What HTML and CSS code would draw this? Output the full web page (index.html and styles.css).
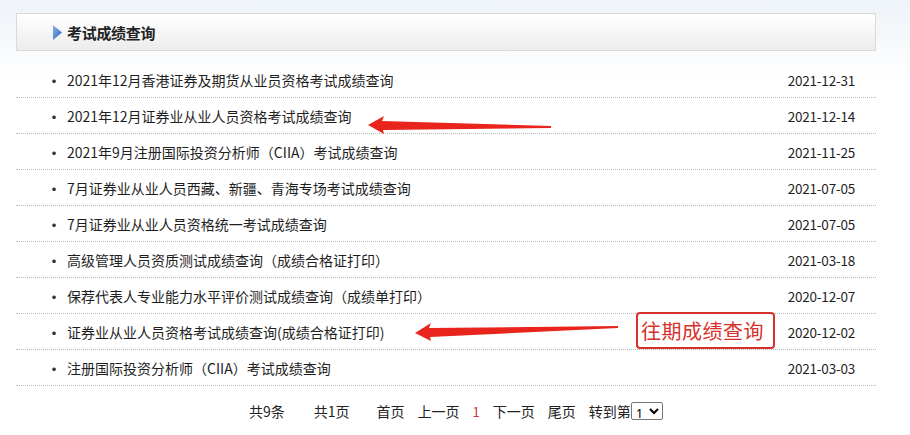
FILE: index.html
```html
<!DOCTYPE html>
<html lang="zh-CN">
<head>
<meta charset="utf-8">
<title>考试成绩查询</title>
<link rel="stylesheet" href="styles.css">
</head>
<body>
<div class="page">
  <div class="panel">
    <div class="panel-head">
      <svg class="tri" width="9" height="15" viewBox="0 0 9 15">
        <defs>
          <linearGradient id="tg" x1="0" y1="0" x2="1" y2="1">
            <stop offset="0" stop-color="#8db6ec"/>
            <stop offset="1" stop-color="#2a5fb8"/>
          </linearGradient>
        </defs>
        <polygon points="0,0 9,7.5 0,15" fill="url(#tg)"/>
      </svg>
      <span class="title">考试成绩查询</span>
    </div>
    <ul class="list">
      <li class="row"><span class="dot">·</span><span class="name">2021年12月香港证券及期货从业员资格考试成绩查询</span><span class="date">2021-12-31</span></li>
      <li class="row"><span class="dot">·</span><span class="name">2021年12月证券业从业人员资格考试成绩查询</span><span class="date">2021-12-14</span></li>
      <li class="row"><span class="dot">·</span><span class="name">2021年9月注册国际投资分析师（CIIA）考试成绩查询</span><span class="date">2021-11-25</span></li>
      <li class="row"><span class="dot">·</span><span class="name">7月证券业从业人员西藏、新疆、青海专场考试成绩查询</span><span class="date">2021-07-05</span></li>
      <li class="row"><span class="dot">·</span><span class="name">7月证券业从业人员资格统一考试成绩查询</span><span class="date">2021-07-05</span></li>
      <li class="row"><span class="dot">·</span><span class="name">高级管理人员资质测试成绩查询（成绩合格证打印）</span><span class="date">2021-03-18</span></li>
      <li class="row"><span class="dot">·</span><span class="name">保荐代表人专业能力水平评价测试成绩查询（成绩单打印）</span><span class="date">2020-12-07</span></li>
      <li class="row"><span class="dot">·</span><span class="name">证券业从业人员资格考试成绩查询(成绩合格证打印)</span><span class="tag">往期成绩查询</span><span class="date">2020-12-02</span></li>
      <li class="row"><span class="dot">·</span><span class="name">注册国际投资分析师（CIIA）考试成绩查询</span><span class="date">2021-03-03</span></li>
    </ul>
    <div class="pager">
      <span class="pg pg-wide">共9条</span>
      <span class="pg pg-wide2">共1页</span>
      <span class="pg">首页</span>
      <span class="pg">上一页</span>
      <span class="pg cur">1</span>
      <span class="pg">下一页</span>
      <span class="pg">尾页</span>
      <span class="goto">转到第</span><select class="sel"><option>1</option></select>
    </div>
  </div>
</div>
<svg class="arrows" width="910" height="435" viewBox="0 0 910 435">
  <polygon points="368,125 384,116 382,121 551,126 551,128 383,130 384,134" fill="#e8241c"/>
  <polygon points="415,333 431,323 429,328 618,326 618,328 430,337 431,341" fill="#e8241c"/>
</svg>
</body>
</html>
```

FILE: styles.css
```css
html, body {
  margin: 0;
  padding: 0;
}
body {
  width: 910px;
  height: 435px;
  overflow: hidden;
  position: relative;
  background: linear-gradient(to bottom, #eef3f8 0, #ffffff 80px);
  font-family: "Noto Sans CJK SC", "Noto Sans", sans-serif;
  color: #1e1e1e;
}
.page {
  padding: 13px 0 0 16px;
}
.panel {
  width: 860px;
}
.panel-head {
  height: 36px;
  border: 1px solid #dadada;
  background: linear-gradient(to bottom, #ffffff 0, #f6f6f6 50%, #ececec 100%);
  display: flex;
  align-items: center;
  padding-left: 36px;
  box-sizing: content-box;
}
.tri {
  display: block;
  margin-right: 5px;
  margin-top: 1px;
}
.title {
  font-size: 15px;
  font-weight: bold;
  color: #222;
  letter-spacing: -0.3px;
}
.list {
  list-style: none;
  margin: 11px 0 0 0;
  padding: 0;
}
.row {
  height: 35px;
  border-bottom: 1px dotted #b8b8b8;
  display: flex;
  align-items: center;
  font-size: 14px;
  padding: 0 21px 0 31px;
  position: relative;
}
.dot {
  width: 20px;
  font-size: 14px;
  font-weight: bold;
  color: #333;
}
.name {
  flex: 1;
  white-space: nowrap;
}
.date {
  font-size: 13.5px;
  letter-spacing: -0.2px;
}
.tag {
  position: absolute;
  left: 620px;
  top: -2px;
  height: 33px;
  padding: 0 9px 0 3px;
  border: 2px solid #d8302a;
  border-radius: 4px;
  background: #fff;
  color: #d8302a;
  font-size: 20px;
  line-height: 33px;
  letter-spacing: 0.5px;
}
.pager {
  display: flex;
  align-items: center;
  height: 50px;
  padding-left: 233px;
  font-size: 14px;
  color: #222;
}
.pg {
  margin-right: 13px;
}
.pg-wide {
  margin-right: 29px;
}
.pg-wide2 {
  margin-right: 27px;
}
.cur {
  color: #c8343a;
  font-size: 13px;
}
.goto {
  margin-right: 0;
}
.sel {
  height: 18px;
  width: 32px;
  font-size: 13px;
  padding: 0;
  border: 1px solid #767676;
  border-radius: 2px;
  background: #fff;
  font-family: "Noto Sans", sans-serif;
}
.arrows {
  position: absolute;
  left: 0;
  top: 0;
  pointer-events: none;
}
```
